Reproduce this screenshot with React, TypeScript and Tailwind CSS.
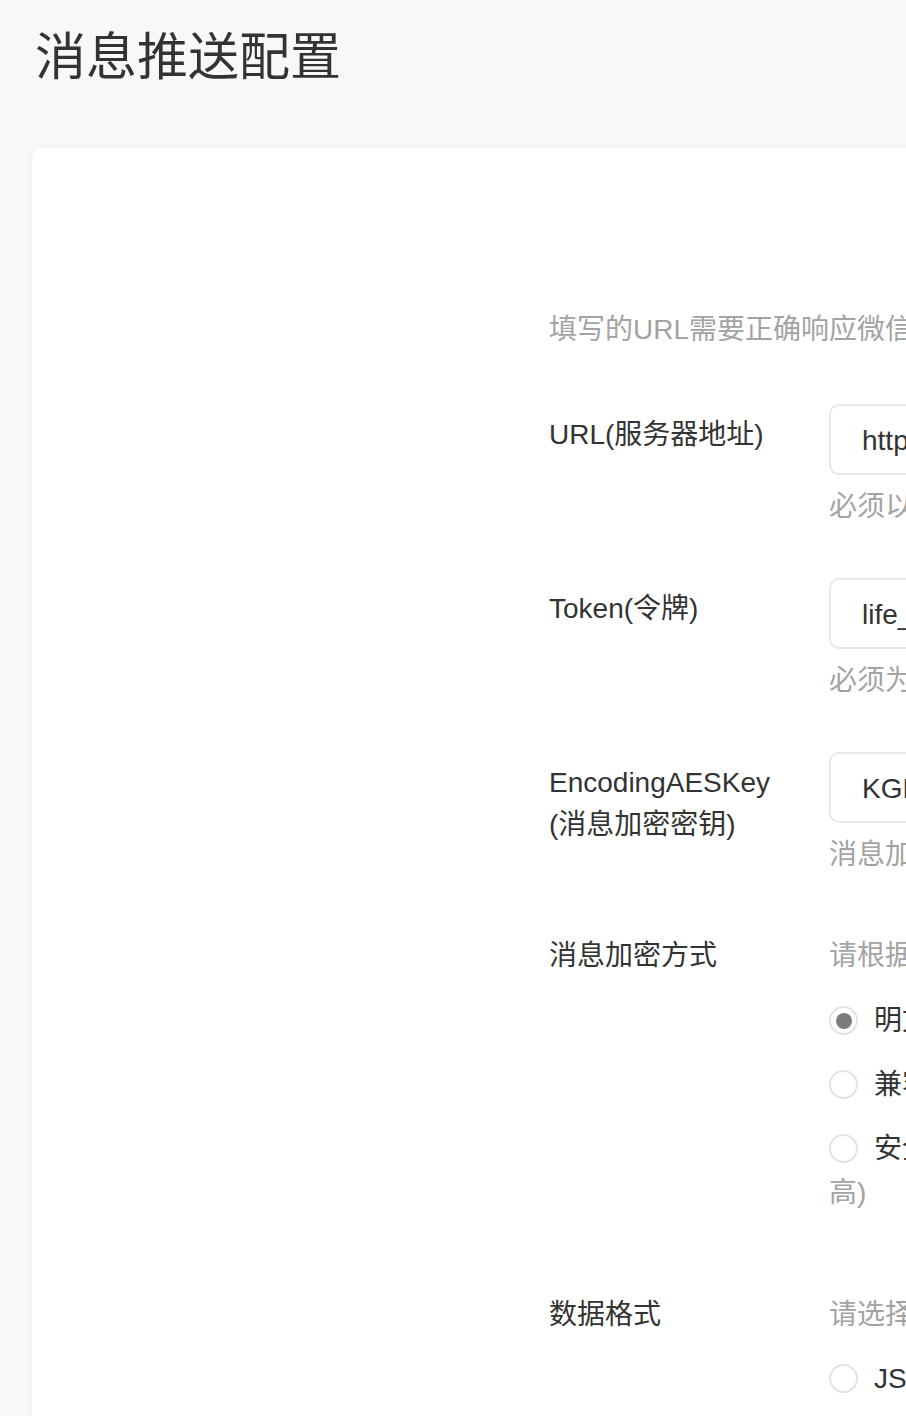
const font = {
  fontFamily: '"Liberation Sans", "Noto Sans CJK SC", sans-serif',
};

const fields = [
  {
    label: ["URL(服务器地址)"],
    value: "https://life.example.com/api/wechat/message/callback",
    help: "必须以http://或https://开头，分别支持80端口和443端口。",
  },
  {
    label: ["Token(令牌)"],
    value: "life_service_token_2024",
    help: "必须为英文或数字，长度为3-32字符。",
  },
  {
    label: ["EncodingAESKey", "(消息加密密钥)"],
    value: "KGLmZ3kqX8vN2pTt7yRbQw5sHc9dJf4uEa6oVi1nPxL",
    help: "消息加密密钥由43位字符组成，可随机修改，字符范围为A-Z，a-z，0-9。",
  },
];

function Radio({ checked }: { checked?: boolean }) {
  return (
    <span className="inline-flex items-center justify-center align-middle w-[29px] h-[29px] rounded-full border-2 border-[#e3e3e3] bg-white mr-[16px] relative top-[-2px]">
      {checked && <span className="w-[16px] h-[16px] rounded-full bg-[#7b7b7b]" />}
    </span>
  );
}

export default function App() {
  return (
    <div className="h-screen w-full overflow-hidden bg-[#f7f8fa] text-[#333]" style={font}>
      <h1 className="pt-[27px] pl-[35px] text-[51px] leading-[62px] font-normal text-[#333]">
        消息推送配置
      </h1>

      <div className="mt-[59px] ml-[32px] w-[1400px] bg-white rounded-[10px] shadow-[0_0_6px_rgba(0,0,0,0.04)] pl-[517px] pt-[161px] pb-[120px]">
        <p className="text-[28px] leading-[42px] text-[#a3a3a3] whitespace-nowrap">
          填写的URL需要正确响应微信发送的Token验证，请阅读消息推送接入指南。
        </p>

        <div className="mt-[53px] flex flex-col gap-[50px]">
          {fields.map((f, i) => (
            <div key={i} className="flex items-start">
              <div className="w-[280px] shrink-0 pt-[10px] text-[28px] leading-[42px]">
                {f.label.map((l) => (
                  <div key={l}>{l}</div>
                ))}
              </div>
              <div className="w-[760px]">
                <div className="h-[71px] border-2 border-[#e8e8e8] rounded-[10px] pl-[31px] pt-[2px] flex items-center text-[28px] whitespace-nowrap overflow-hidden">
                  {f.value}
                </div>
                <p className="mt-[11px] text-[28px] leading-[42px] text-[#a3a3a3] whitespace-nowrap">
                  {f.help}
                </p>
              </div>
            </div>
          ))}
        </div>

        <div className="mt-[51px] flex items-start">
          <div className="w-[280px] shrink-0 pt-[8px] text-[28px] leading-[42px]">消息加密方式</div>
          <div className="w-[760px] pt-[8px] text-[28px] leading-[42px]">
            <p className="text-[#a3a3a3] whitespace-nowrap">请根据业务需要，选择消息加解密类型，启用后将立即生效。</p>
            <div className="mt-[23px] whitespace-nowrap">
              <Radio checked />
              明文模式（不使用消息体加解密功能，安全系数较低）
            </div>
            <div className="mt-[22px] whitespace-nowrap">
              <Radio />
              兼容模式（明文、密文将共存，方便开发者调试和维护）
            </div>
            <div className="mt-[21px] leading-[44px]">
              <span className="whitespace-nowrap">
                <Radio />
                安全模式（推荐）（消息包为纯密文，需要开发者加密和解密，安全系数
              </span>
              <br />
              <span className="text-[#a3a3a3]">高)</span>
            </div>
          </div>
        </div>

        <div className="mt-[71px] flex items-start">
          <div className="w-[280px] shrink-0 pt-[8px] text-[28px] leading-[42px]">数据格式</div>
          <div className="w-[760px] pt-[8px] text-[28px] leading-[42px]">
            <p className="text-[#a3a3a3] whitespace-nowrap">请选择消息推送的数据格式</p>
            <div className="mt-[22px] whitespace-nowrap">
              <Radio />
              JSON
            </div>
            <div className="mt-[22px] whitespace-nowrap">
              <Radio />
              XML
            </div>
          </div>
        </div>
      </div>
    </div>
  );
}
